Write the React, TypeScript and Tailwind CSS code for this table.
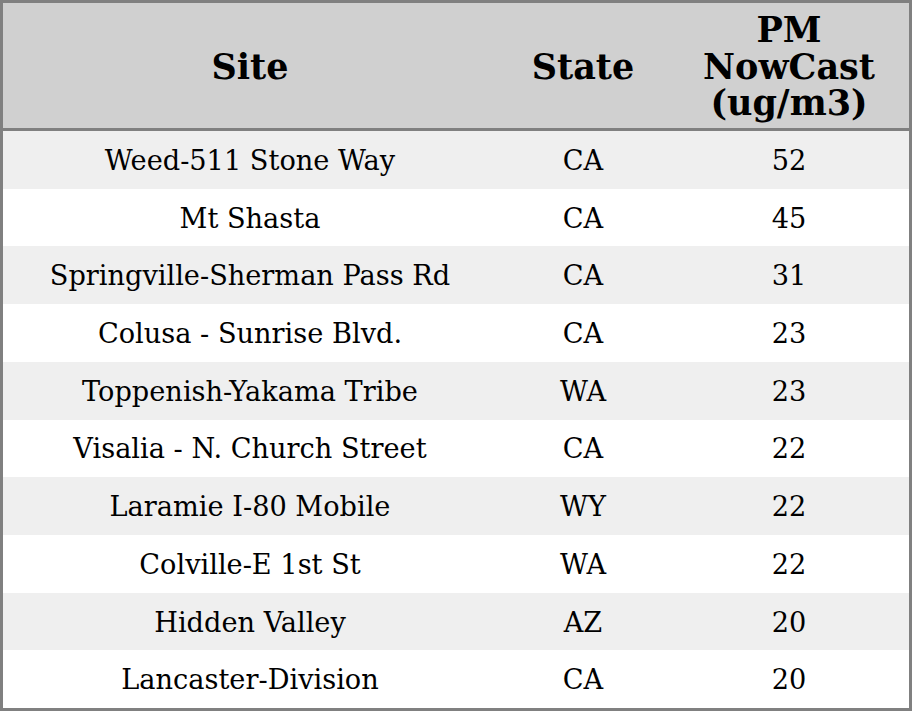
const rows: [string, string, string][] = [
  ["Weed-511 Stone Way", "CA", "52"],
  ["Mt Shasta", "CA", "45"],
  ["Springville-Sherman Pass Rd", "CA", "31"],
  ["Colusa - Sunrise Blvd.", "CA", "23"],
  ["Toppenish-Yakama Tribe", "WA", "23"],
  ["Visalia - N. Church Street", "CA", "22"],
  ["Laramie I-80 Mobile", "WY", "22"],
  ["Colville-E 1st St", "WA", "22"],
  ["Hidden Valley", "AZ", "20"],
  ["Lancaster-Division", "CA", "20"],
];

export default function App() {
  return (
    <div
      className="w-[912px] h-[711px] border-[3px] border-[#808080] bg-white flex flex-col text-black"
      style={{ fontFamily: '"DejaVu Serif", serif' }}
    >
      {/* header */}
      <div className="h-[128px] shrink-0 pt-[3px] grid grid-cols-[494px_172px_240px] items-center bg-[#d0d0d0] border-b-[3px] border-[#808080] text-[35px] leading-[36.5px] font-bold text-center">
        <div>Site</div>
        <div>State</div>
        <div>
          PM
          <br />
          NowCast
          <br />
          (ug/m3)
        </div>
      </div>

      {/* body rows */}
      <div className="flex-1 flex flex-col">
        {rows.map(([site, state, pm], i) => (
          <div
            key={site}
            className={
              "flex-1 pt-[3px] grid grid-cols-[494px_172px_240px] items-center text-center text-[27.2px] " +
              (i % 2 === 0 ? "bg-[#efefef]" : "bg-white")
            }
          >
            <div>{site}</div>
            <div>{state}</div>
            <div>{pm}</div>
          </div>
        ))}
      </div>
    </div>
  );
}
